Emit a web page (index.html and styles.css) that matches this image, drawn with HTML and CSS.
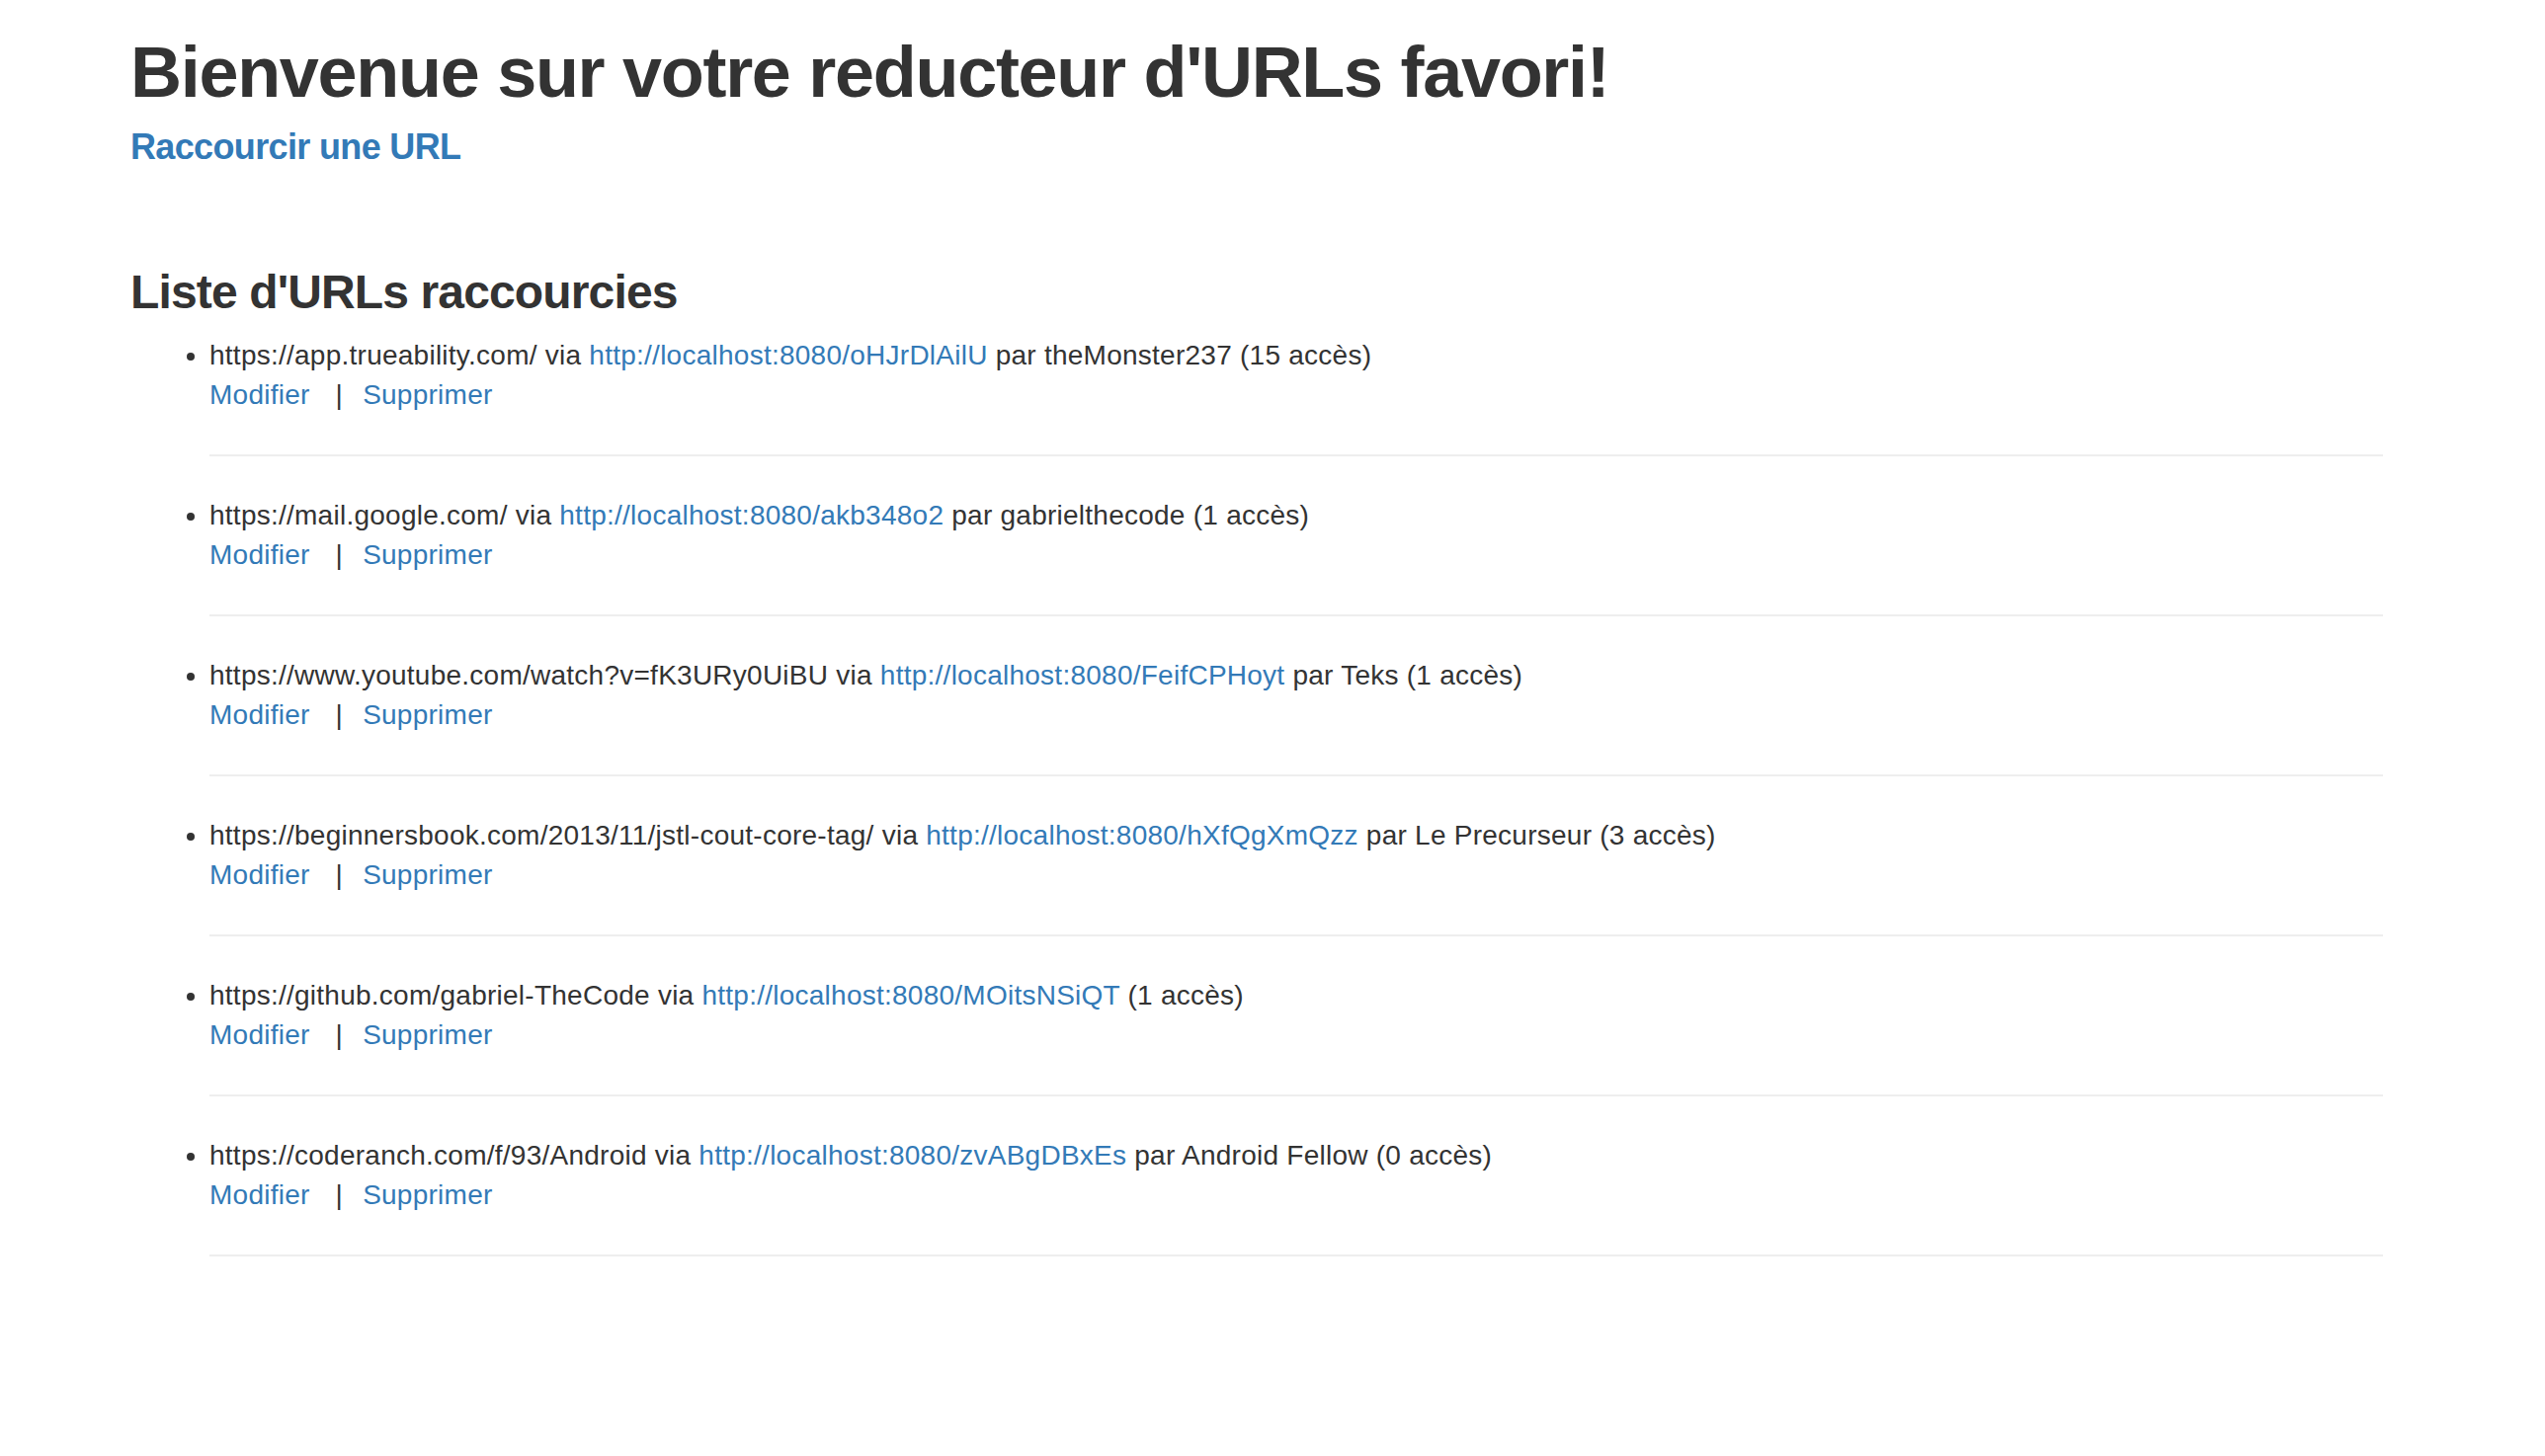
FILE: index.html
```html
<!DOCTYPE html>
<html lang="fr">
<head>
<meta charset="utf-8">
<title>Réducteur d'URLs</title>
<link rel="stylesheet" href="styles.css">
</head>
<body>
<div class="container">
  <h1 class="title">Bienvenue sur votre reducteur d'URLs favori!</h1>
  <h4 class="subtitle"><a href="#">Raccourcir une URL</a></h4>
  <h3 class="list-title">Liste d'URLs raccourcies</h3>
  <ul class="url-list">
    <li class="url-item">
      <div class="line">https://app.trueability.com/ via <a href="#">http://localhost:8080/oHJrDlAilU</a> par theMonster237 (15 accès)</div>
      <div class="line"><a href="#">Modifier</a><span class="sep">|</span><a href="#">Supprimer</a></div>
      <hr class="rule">
    </li>
    <li class="url-item">
      <div class="line">https://mail.google.com/ via <a href="#">http://localhost:8080/akb348o2</a> par gabrielthecode (1 accès)</div>
      <div class="line"><a href="#">Modifier</a><span class="sep">|</span><a href="#">Supprimer</a></div>
      <hr class="rule">
    </li>
    <li class="url-item">
      <div class="line">https://www.youtube.com/watch?v=fK3URy0UiBU via <a href="#">http://localhost:8080/FeifCPHoyt</a> par Teks (1 accès)</div>
      <div class="line"><a href="#">Modifier</a><span class="sep">|</span><a href="#">Supprimer</a></div>
      <hr class="rule">
    </li>
    <li class="url-item">
      <div class="line">https://beginnersbook.com/2013/11/jstl-cout-core-tag/ via <a href="#">http://localhost:8080/hXfQgXmQzz</a> par Le Precurseur (3 accès)</div>
      <div class="line"><a href="#">Modifier</a><span class="sep">|</span><a href="#">Supprimer</a></div>
      <hr class="rule">
    </li>
    <li class="url-item">
      <div class="line">https://github.com/gabriel-TheCode via <a href="#">http://localhost:8080/MOitsNSiQT</a> (1 accès)</div>
      <div class="line"><a href="#">Modifier</a><span class="sep">|</span><a href="#">Supprimer</a></div>
      <hr class="rule">
    </li>
    <li class="url-item">
      <div class="line">https://coderanch.com/f/93/Android via <a href="#">http://localhost:8080/zvABgDBxEs</a> par Android Fellow (0 accès)</div>
      <div class="line"><a href="#">Modifier</a><span class="sep">|</span><a href="#">Supprimer</a></div>
      <hr class="rule">
    </li>
  </ul>
</div>
</body>
</html>
```

FILE: styles.css
```css
html, body {
  margin: 0;
  padding: 0;
  background: #ffffff;
}

body {
  font-family: "Liberation Sans", Arial, Helvetica, sans-serif;
  font-size: 28px;
  line-height: 40px;
  color: #333333;
}

a {
  color: #337ab7;
  text-decoration: none;
}

.container {
  width: 2280px;
  padding-left: 132px;
}

.title {
  font-size: 72px;
  line-height: 80px;
  font-weight: 700;
  letter-spacing: -0.018em;
  margin: 33px 0 16px 0;
  color: #333333;
}

.subtitle {
  font-size: 36px;
  line-height: 40px;
  font-weight: 700;
  letter-spacing: -0.018em;
  margin: 0;
}

.list-title {
  font-size: 48px;
  line-height: 53px;
  font-weight: 700;
  letter-spacing: -0.018em;
  margin: 100px 0 18px 0;
  color: #333333;
}

.url-list {
  margin: 0;
  padding-left: 80px;
}

.url-item .line {
  height: 40px;
  white-space: nowrap;
  letter-spacing: 0.25px;
}

.sep {
  display: inline-block;
  margin: 0 20px 0 26px;
  color: #333333;
}

.rule {
  margin: 40px 0;
  border: 0;
  border-top: 2px solid #eeeeee;
  height: 0;
}
```
